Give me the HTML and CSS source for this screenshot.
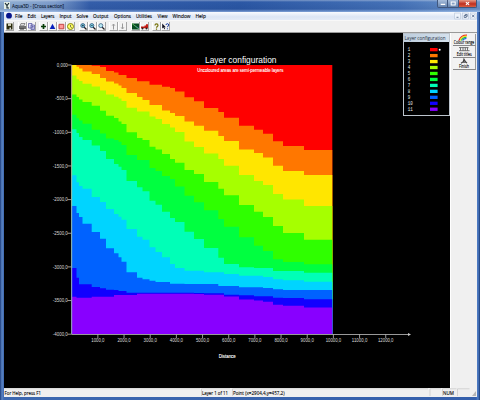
FILE: index.html
```html
<!DOCTYPE html>
<html lang="en">
<head>
<meta charset="utf-8">
<title>Aqua3D - [Cross section]</title>
<link rel="stylesheet" href="styles.css">
</head>
<body>
<div class="window">
  <header class="titlebar">
    <svg class="app-icon" viewBox="0 0 7 7"><rect width="6" height="7" fill="#e4eee8"/><path d="M1 1l2 2.500L5 1M3 3.500V6h2" stroke="#12252b" stroke-width="1.100" fill="none"/></svg>
    <svg class="caption" viewBox="0 0 83 9"><text y="6.300" textLength="52" lengthAdjust="spacingAndGlyphs">Aqua3D - [Cross section]</text></svg>
    <div class="controls">
      <span class="ctl"><svg viewBox="0 0 10 7"><path d="M3 4.500h5" stroke="#fff" stroke-width="1.300"/></svg></span>
      <span class="ctl"><svg viewBox="0 0 10 7"><rect x="3.200" y="2" width="4" height="3" stroke="#fff" fill="none"/></svg></span>
      <span class="ctl close"><svg viewBox="0 0 18 7"><path d="M7.300 2l3.400 3M10.700 2l-3.400 3" stroke="#fff" stroke-width="1.200"/></svg></span>
    </div>
  </header>
  <nav class="menubar">
    <svg class="menus" viewBox="0 0 210 8">
      <circle cx="5" cy="3.700" r="2.900" fill="#06148c"/>
      <g class="menu-text">
        <text x="11" y="6" textLength="7.500" lengthAdjust="spacingAndGlyphs">File</text>
        <text x="23.500" y="6" textLength="8.500" lengthAdjust="spacingAndGlyphs">Edit</text>
        <text x="37" y="6" textLength="13.500" lengthAdjust="spacingAndGlyphs">Layers</text>
        <text x="55.500" y="6" textLength="12" lengthAdjust="spacingAndGlyphs">Input</text>
        <text x="72.500" y="6" textLength="11.500" lengthAdjust="spacingAndGlyphs">Solve</text>
        <text x="89" y="6" textLength="15.500" lengthAdjust="spacingAndGlyphs">Output</text>
        <text x="110" y="6" textLength="17" lengthAdjust="spacingAndGlyphs">Options</text>
        <text x="132" y="6" textLength="16" lengthAdjust="spacingAndGlyphs">Utilities</text>
        <text x="153.500" y="6" textLength="10" lengthAdjust="spacingAndGlyphs">View</text>
        <text x="168.500" y="6" textLength="18" lengthAdjust="spacingAndGlyphs">Window</text>
        <text x="191.500" y="6" textLength="10.500" lengthAdjust="spacingAndGlyphs">Help</text>
      </g>
    </svg>
    <svg class="mdi" viewBox="0 0 23 8"><g fill="#eef3fb" stroke="#b6c3d8" stroke-width=".6"><rect x=".7" y="1" width="5.800" height="6"/><rect x="8.500" y="1" width="5.800" height="6"/><rect x="16.300" y="1" width="5.800" height="6"/></g><g stroke="#4c6285" fill="none" stroke-width=".8"><path d="M2.500 5.300h2M18 2.700l2.400 2.600M20.400 2.700L18 5.300"/><path d="M10.200 3.500h2v2h-2zM11.200 3.300v-.8h2v2h-.8"/></g></svg>
  </nav>
  <div class="toolbar">
    <div class="group"><span class="tool"><svg viewBox="0 0 9 9"><path d="M1.500 1.500h6v6h-6z" fill="#2a2a0a"/><path d="M3 1.500h3v2.400H3z" fill="#d8d8c0"/><path d="M4.500 5.500h1.500v2H4.500z" fill="#ddd"/></svg></span></div>
    <div class="group">
      <span class="tool"><svg viewBox="0 0 9 9"><path d="M3 1.500h4l-1 2.300H2z" fill="#ddd" stroke="#555" stroke-width=".6"/><path d="M1 4h7v3H1z" fill="#707070"/><path d="M2 6.500h4v1H2z" fill="#333"/></svg></span>
      <span class="tool"><svg viewBox="0 0 9 9"><g fill="#dcdcf4" stroke="#4c4c9c" stroke-width=".7"><path d="M1.500 1.500h3.500v4.500H1.500zM4 3h3.500v4.500H4z"/><path d="M5 4.500h1.700M5 6h1.700"/></g></svg></span>
    </div>
    <div class="group">
      <span class="tool"><svg viewBox="0 0 9 9"><path d="M4.500 2v5M2 4.500h5" stroke="#053c05" stroke-width="1.700"/></svg></span>
      <span class="tool"><svg viewBox="0 0 9 9"><path d="M4.500 1.800L7.300 7H1.700z" fill="#0720bd"/></svg></span>
      <span class="tool"><svg viewBox="0 0 9 9"><path d="M2 2.300h4.800v4.500H2z" fill="#f99" stroke="#c34545"/></svg></span>
      <span class="tool"><svg viewBox="0 0 9 9"><circle cx="4.500" cy="4.500" r="3" fill="#ff6" stroke="#87870e"/><path d="M4.500 2.800v2l1.300 1" stroke="#555" stroke-width=".8" fill="none"/></svg></span>
    </div>
    <div class="group">
      <span class="tool"><svg viewBox="0 0 9 9"><path d="M5 5l2.500 2.500" stroke="#222" stroke-width="1.300"/><circle cx="3.800" cy="3.600" r="2" fill="#85dbe9" stroke="#355a83" stroke-width=".9"/><path d="M2.800 3.600h2M3.800 2.600v2" stroke="#123" stroke-width=".7"/></svg></span>
      <span class="tool"><svg viewBox="0 0 9 9"><path d="M5 5l2.500 2.500" stroke="#222" stroke-width="1.300"/><circle cx="3.800" cy="3.600" r="2" fill="#85dbe9" stroke="#355a83" stroke-width=".9"/><path d="M2.800 3.600h2" stroke="#123" stroke-width=".7"/></svg></span>
      <span class="tool"><svg viewBox="0 0 9 9"><path d="M5 5l2.500 2.500" stroke="#222" stroke-width="1.300"/><circle cx="3.800" cy="3.600" r="2" fill="#b9eaf1" stroke="#496b8d" stroke-width=".9"/></svg></span>
    </div>
    <div class="group">
      <span class="tool"><svg viewBox="0 0 9 9"><path d="M4.500 7.500V2.300M3.200 3.600l1.300-1.600 1.300 1.600" stroke="#999" fill="none"/></svg></span>
      <span class="tool"><svg viewBox="0 0 9 9"><path d="M4.500 1.500v5.200M3.200 5.400L4.500 7l1.300-1.600" stroke="#999" fill="none"/></svg></span>
    </div>
    <div class="group">
      <span class="tool"><svg viewBox="0 0 9 9"><path d="M1 1.500h7v6H1z" fill="#084d22"/><path d="M1 1.500l7 4.500v1.500z" fill="#193bc4"/><path d="M1 1.500L8 7" stroke="#65c451" stroke-width=".9"/></svg></span>
      <span class="tool"><svg viewBox="0 0 9 9"><path d="M1 4.500h3.500v-1h1.500V2.200H8v4H1z" fill="#c41b13"/><circle cx="2.500" cy="6.500" r="1" fill="#222"/><circle cx="6.500" cy="6.500" r="1" fill="#222"/></svg></span>
    </div>
    <div class="group">
      <span class="tool"><svg viewBox="0 0 9 9"><path d="M3 3.500c0-2.200 3-2.200 3 0 0 1-1.500 1-1.500 2.200M4.500 6.500v1.200" stroke="#77730c" stroke-width="1.200" fill="none"/></svg></span>
      <span class="tool"><svg viewBox="0 0 9 9"><path d="M1.200 1.500v5l1.300-1 .8 1.800.8-.4-.8-1.700h1.500z" fill="#112"/><path d="M5 3c0-1.800 2.700-1.800 2.700 0 0 1-1.300 1-1.300 2.200M6.400 6.300v1" stroke="#183da4" stroke-width="1" fill="none"/></svg></span>
    </div>
  </div>
  <main class="work">
    <div class="canvas">
      <svg class="plot" viewBox="4 33 446 355">
        <g id="layers"></g>
        <g id="axes"></g>
        <text class="plot-title" x="205" y="63" textLength="71.500" lengthAdjust="spacingAndGlyphs">Layer configuration</text>
        <text class="note" x="197.300" y="71.700" textLength="86" lengthAdjust="spacingAndGlyphs">Uncoloured areas are semi-permeable layers</text>
        <text class="label" x="218.700" y="357.500" textLength="17" lengthAdjust="spacingAndGlyphs">Distance</text>
      </svg>
      <section class="legend">
        <svg class="legend-title" viewBox="0 0 45 8"><text x="0.500" y="5.700" textLength="41" lengthAdjust="spacingAndGlyphs">Layer configuration</text></svg>
        <svg class="legend-body" id="legend" viewBox="0 0 45 73"></svg>
      </section>
    </div>
    <aside class="side">
      <button class="action"><svg viewBox="0 0 22 11"><g fill="none" stroke-width="1.200"><path d="M6 6.500C7 3.500 9.500 1 14 1.100" stroke="#ef2b21"/><path d="M7.200 6.500c.8-3 2.800-4.300 6.500-4.300" stroke="#f1df23"/><path d="M8.400 6.500c.7-2 2.500-3.200 5-3.200" stroke="#20c443"/><path d="M9.600 6.500c.7-1.300 2-2.100 3.800-2.200" stroke="#245de5"/></g><text x=".8" y="9.900" textLength="20.400" lengthAdjust="spacingAndGlyphs">Colour range</text></svg></button>
      <button class="action"><svg viewBox="0 0 22 11"><g fill="none" stroke="#555" stroke-width=".8"><path d="M6 1.600h9.500M6 4.700h10.500M7.500 1.600v3M10 1.600v3M12.300 1.600v3M14.500 1.600v3"/></g><text x="3.700" y="9.700" textLength="15" lengthAdjust="spacingAndGlyphs">Edit titles</text></svg></button>
      <button class="action"><svg viewBox="0 0 22 11"><path d="M8 5.200l2.300-1.500.7-2.400 1.500 2.400 1.500 1.500M10 4.200h2.500" fill="none" stroke="#444" stroke-width="1.200"/><text x="6" y="9.700" textLength="10" lengthAdjust="spacingAndGlyphs">Finish</text></svg></button>
    </aside>
  </main>
  <footer class="status">
    <svg viewBox="0 0 473 9">
      <g stroke="#c5c5c5" fill="none" stroke-width=".7"><path d="M0 .8h196M197.500 8V.8h28.500M228.500 8V.8H424M426 8V.8h11M438.500 8V.8h14M453.500 8V.8h12"/></g>
      <text x=".5" y="6.700" textLength="36.500" lengthAdjust="spacingAndGlyphs">For Help, press F1</text>
      <text x="198" y="6.700" textLength="26" lengthAdjust="spacingAndGlyphs">Layer 1 of 11</text>
      <text x="229" y="6.700" textLength="51.500" lengthAdjust="spacingAndGlyphs">Point (x=2904,4,y=457,2)</text>
      <text x="439" y="6.700" textLength="11" lengthAdjust="spacingAndGlyphs">NUM</text>
      <path d="M468 8l4-5v5z" fill="#b5b5b5"/>
    </svg>
  </footer>
</div>
<script src="chart.js"></script>
</body>
</html>
```
FILE: styles.css
```css
* { box-sizing: border-box; }
body { margin: 0; background: #000; font-family: "Open Sans", "Noto Sans", sans-serif; }
svg { display: block; overflow: visible; }
.window {
  width: 480px; height: 400px; overflow: hidden;
  display: grid; grid-template-rows: 12px 9px 12px 355px 9px;
  padding: 0 3px 3px 4px;
  background: linear-gradient(90deg, #1d3d7c 0, #5b84c4 2px, #3d68b0 4px, #3560ac 476px, #5280c8 478px, #173875 480px);
}
.titlebar {
  display: flex; align-items: flex-start; margin: 0 -3px 0 -4px; padding-left: 4px;
  background: linear-gradient(180deg, rgba(255,255,255,.35), rgba(255,255,255,0) 2px, rgba(15,45,110,.12) 9px, rgba(190,215,250,.55)), linear-gradient(90deg, #91afd2 0, #7e9dcb 55px, #345eaa 90px, #2c58a5 240px, #4673b8 400px, #6f97cc);
}
.app-icon { width: 7px; height: 7px; margin-top: 2px; }
.caption { width: 83px; height: 9px; margin: 2px 0 0 .5px; }
.caption text { font-size: 5.8px; fill: #08152c; stroke: #08152c; stroke-width: .1px; }
.controls { display: flex; margin-left: auto; margin-right: 3px; border: 1px solid #40577e; border-top: 0; border-radius: 0 0 2px 2px; overflow: hidden; }
.ctl { width: 11px; height: 7px; background: linear-gradient(#a7bddb, #6584b0); border-right: 1px solid #40577e; }
.ctl:first-child { width: 10px; }
.ctl svg { height: 7px; width: 100%; }
.ctl.close { width: 17px; border: 0; background: linear-gradient(#e69b87, #bf2e20 55%, #d75f43); }
.menubar { display: flex; justify-content: space-between; background: linear-gradient(#f9fbff, #dce5f4 60%, #e4ebf7); border-bottom: 1px solid #f8f8f8; }
.menus { width: 210px; height: 8px; }
.menu-text text { font-size: 5.7px; fill: #000; stroke: #000; stroke-width: .12px; }
.mdi { width: 23px; height: 8px; }
.toolbar { display: flex; align-items: center; gap: 3.5px; background: #f0f0f0; border-bottom: 1px solid #999; padding-left: 1px; }
.group { display: flex; }
.tool { width: 9px; height: 9.5px; background: #f3f3f3; border-right: 1px solid #a5a5a5; border-bottom: 1px solid #a5a5a5; border-left: 1px solid #fff; }
.tool svg { width: 9px; height: 9px; margin-left: -1px; }
.work { display: grid; grid-template-columns: 446px 1fr; }
.canvas { position: relative; background: #000; }
.plot { width: 446px; height: 355px; }
.plot text, .legend text { font-family: "Liberation Sans", sans-serif; fill: #fff; }
.plot .plot-title { font-size: 8.4px; }
.plot .note { font-size: 4.5px; stroke: #fff; stroke-width: .1px; }
.plot .label { font-size: 4.7px; stroke: #fff; stroke-width: .1px; }
.plot .tick { font-size: 5px; fill: #ddd; }
.axis { stroke: #aaa; stroke-width: .9; fill: none; }
.legend { position: absolute; top: 0; right: 0; width: 47px; height: 83px; border: 1px solid #bcc4cc; background: #000; }
.legend-title { width: 45px; height: 8px; background: linear-gradient(90deg, #bdcddd, #d5e1ed); }
.legend .legend-title text { font-family: "Open Sans", sans-serif; font-size: 5.4px; fill: #26313e; }
.legend-body { width: 45px; height: 73px; }
.legend .legend-body text { font-family: "Liberation Mono", monospace; font-size: 4.9px; fill: #eee; }
.side { background: #f0f0f0; border-left: 1px solid #fff; padding: 1px 1px 0 2px; }
.action { display: block; width: 23px; height: 12px; margin: 0; padding: 0; background: #f2f2f2; border: 0; border-right: 1px solid #999; border-bottom: 1px solid #888; }
.action svg { width: 22px; height: 11px; }
.action text { font-family: "Open Sans", sans-serif; font-size: 4.8px; fill: #000; stroke: #000; stroke-width: .1px; }
.action:last-child { margin-bottom: 3px; }
.status { background: #f0f0f0; }
.status svg { width: 473px; height: 9px; }
.status text { font-size: 5.4px; fill: #000; stroke: #000; stroke-width: .1px; }
```
FILE: chart.js
```js
// Cell edges along the section, and the top of each layer in every cell.
const edges = [71.7, 76.5, 79, 82.5, 91.7, 100, 106, 114, 118.5, 121.5, 126.5, 137, 142.5, 149.5, 155.5, 162, 170, 175, 184.5, 194, 204, 218.3, 224, 239, 254, 263, 273, 283, 304, 332.3];
const colours = ["#ff0000", "#ff7700", "#ffe600", "#a6ff00", "#2fff00", "#00ff40", "#00ffb7", "#00d4ff", "#0062ff", "#1100ff", "#8800ff"];
const tops = [
  Array(29).fill(65),
  [65,65,65,65,65.7,67,71,72.5,75,75,78,81.3,81.3,84.7,84.7,86.7,88,91.6,97.3,101.3,108,112,117.8,125.7,129.7,133.7,141.3,146,150],
  [65,66.7,68.5,71.5,74,78,81.5,83.5,85.5,88,93,97,100,105,105,110.5,113,116,121.5,125.7,130.7,136,141,149.5,153,157.5,165.7,171,175],
  [75.5,79.3,81,83.7,86.5,90.5,94.5,96.7,98.5,101,107.7,111.5,111.5,116.5,119,124,127.5,132,141.5,147,153.5,159,165.7,175,181,185,194,199.5,206],
  [94.5,97,99.5,102,105.7,110.7,115.7,118,121.5,124,132.3,138,140,146.7,149.5,154,159,162.7,170,174,182,188.7,195.3,205,211.7,217,226,233,239.7],
  [114.7,118.3,120.5,123.7,129.7,133.5,138.5,140,141.7,145,155,160,160,168,171,176,179,186.5,195.7,202.3,210.3,219,226.7,237.3,245.7,251,259.3,262,264.3],
  [129.3,133,137,140,145.5,151,159,164,166.7,170,181,187.3,191.3,200.7,204.7,211.7,218,222,231.7,239,248,257.7,264,267.3,268,268,271,271,272.7],
  [175.3,182.3,186,188.7,197,202,209,214,216.7,219.7,229,236.7,239.7,247.3,252,257.3,264,268,270.7,270.7,272.3,272.3,274,275.7,275.7,277,279.3,280.3,281.7],
  [206,213,217,223.7,232,238.7,248.3,253.3,257.3,261.7,272.3,277.7,279.3,280.7,282,282,283.7,283.7,284,284,284,286,286,287.3,287.3,288,289.3,290,290],
  [268,277.7,284.3,284.3,287,288.3,289.7,290,291,291,292.7,292.7,292.7,292.7,292.7,292.7,292.7,292.7,292.7,293,293.3,293.3,294.7,295.3,296.3,296.3,297.7,298,299.3],
  [296.7,297.7,297.7,297.7,296.7,296.7,296.7,295,295,295,295,293.7,293.7,293.7,293.7,293.7,293.7,293.7,293.7,293.9,294.7,294.7,296.5,299.5,300.5,301.7,304.7,305.7,307.5]
];

// Each layer runs down to the base; the next one is painted over it.
document.getElementById("layers").innerHTML = tops.map((row, i) => {
  const steps = row.map((y, c) => `V${y}H${edges[c + 1]}`).join("");
  return `<path fill="${colours[i]}" d="M71.7 334${steps}V334z"/>`;
}).join("");

let axes = '<path class="axis" d="M71.700 65V334.500H409"/><path d="M408 333l3 1.500-3 1.500z" fill="#ccc"/>';
for (let i = 0; i <= 8; i++) {
  const y = 65 + i * 33.65;
  const text = i === 0 ? "0,000" : `-${i * 500},0`;
  const w = i === 0 ? 11 : i === 1 ? 12.5 : 15;
  axes += `<path class="axis" d="M67.500 ${y}h4"/><text class="tick" x="${67.8 - w}" y="${y + 1.7}" textLength="${w}" lengthAdjust="spacingAndGlyphs">${text}</text>`;
}
for (let i = 1; i <= 12; i++) {
  const x = 71.7 + i * 26.17;
  const w = i > 9 ? 15.5 : 13.3;
  axes += `<path class="axis" d="M${x} 334v4"/><text class="tick" x="${x - w / 2}" y="341.900" textLength="${w}" lengthAdjust="spacingAndGlyphs">${i * 1000},0</text>`;
}
document.getElementById("axes").innerHTML = axes;

document.getElementById("legend").innerHTML = colours.map((c, i) => {
  const y = 7.7 + i * 5.96;
  return `<text x="3.700" y="${y + 1.6}" textLength="${i > 8 ? 5 : 2.5}" lengthAdjust="spacingAndGlyphs">${i + 1}</text><rect x="26" y="${y - 1.7}" width="7.600" height="3.300" fill="${c}"/>`;
}).join("") + '<circle cx="35.700" cy="7.700" r="1" fill="#fff"/>';
```
